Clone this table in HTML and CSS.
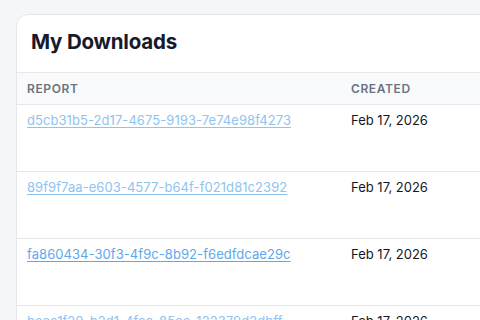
FILE: index.html
```html
<!DOCTYPE html>
<html lang="en">
<head>
<meta charset="utf-8">
<title>My Downloads</title>
<link rel="stylesheet" href="styles.css">
</head>
<body>
<div class="card">
  <div class="card-head"><h1 class="title">My Downloads</h1></div>
  <div class="table">
    <div class="row head">
      <div class="cell">Report</div>
      <div class="cell">Created</div>
    </div>
    <div class="row">
      <div class="cell"><a class="link" href="#">d5cb31b5-2d17-4675-9193-7e74e98f4273</a></div>
      <div class="cell date">Feb 17, 2026</div>
    </div>
    <div class="row">
      <div class="cell"><a class="link" href="#">89f9f7aa-e603-4577-b64f-f021d81c2392</a></div>
      <div class="cell date">Feb 17, 2026</div>
    </div>
    <div class="row">
      <div class="cell"><a class="link strong" href="#">fa860434-30f3-4f9c-8b92-f6edfdcae29c</a></div>
      <div class="cell date">Feb 17, 2026</div>
    </div>
    <div class="row">
      <div class="cell"><a class="link" href="#">baea1f20-b2d1-4fcc-85ea-122379d2dbff</a></div>
      <div class="cell date">Feb 17, 2026</div>
    </div>
  </div>
</div>
</body>
</html>
```
FILE: styles.css
```css
html, body {
  margin: 0;
  height: 100%;
  overflow: hidden;
}
body {
  background: #f5f6f8;
  padding: 14px 0 0 16px;
  box-sizing: border-box;
  font-family: Inter, "Noto Sans", sans-serif;
}
.card {
  width: 640px;
  background: #fff;
  border: 1px solid #e5e7eb;
  border-radius: 12px;
}
.card-head {
  height: 57px;
  display: flex;
  align-items: center;
  padding: 0 14px;
}
.title {
  margin: 0;
  font-size: 20.5px;
  font-weight: 700;
  letter-spacing: -0.01em;
  color: #161a2b;
  line-height: 1;
  position: relative;
  top: -1px;
}
.row {
  display: grid;
  grid-template-columns: 324px 1fr;
  border-top: 1px solid #e5e7eb;
  height: 66px;
}
.row.head {
  height: 31px;
  background: #f9fafb;
  align-items: center;
}
.head .cell {
  font-size: 12px;
  font-weight: 600;
  letter-spacing: 0.05em;
  text-transform: uppercase;
  color: #6b7280;
  padding-top: 0;
  line-height: 16px;
}
.cell {
  padding: 5px 10px 0;
  font-size: 13px;
  line-height: 20px;
}
.link {
  color: #90c3f0;
  text-decoration: underline;
  text-underline-offset: 2px;
  letter-spacing: 0.005em;
}
.link.strong {
  color: #5ea8ee;
}
.date {
  color: #111827;
}
```
